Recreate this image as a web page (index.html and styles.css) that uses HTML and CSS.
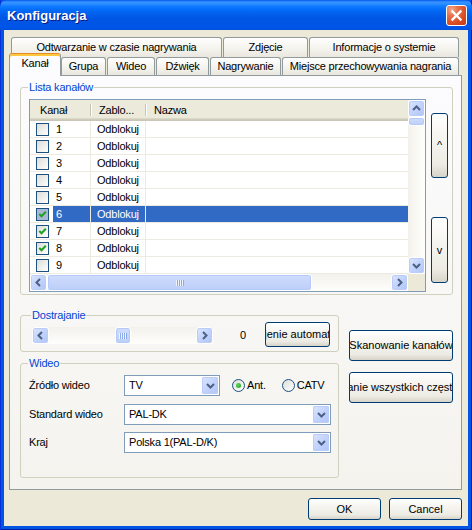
FILE: index.html
```html
<!DOCTYPE html>
<html lang="pl">
<head>
    <meta charset="UTF-8">
    <title>Konfiguracja</title>
    <link rel="stylesheet" href="styles.css">
</head>
<body>
    <div class="window">
        <div class="titlebar">
            <span class="title">Konfiguracja</span>
            <span class="close-btn">
                <svg width="19" height="19" viewBox="0 0 19 19"><path d="M5.5 5.5 L13.5 13.5 M13.5 5.5 L5.5 13.5" stroke="#fff" stroke-width="2.4" stroke-linecap="square"/></svg>
            </span>
        </div>

        <div class="client">
            <div class="tabs">
                <div class="tabrow back">
                    <div class="tab tab-odtw">Odtwarzanie w czasie nagrywania</div>
                    <div class="tab tab-zdj">Zdjęcie</div>
                    <div class="tab tab-info">Informacje o systemie</div>
                </div>
                <div class="tabrow front">
                    <div class="tab tab-kanal active">Kanał</div>
                    <div class="tab tab-grupa">Grupa</div>
                    <div class="tab tab-wideo">Wideo</div>
                    <div class="tab tab-dzwiek">Dźwięk</div>
                    <div class="tab tab-nagr">Nagrywanie</div>
                    <div class="tab tab-miejsce">Miejsce przechowywania nagrania</div>
                </div>
            </div>

            <div class="pane">
                <fieldset class="group channels">
                    <legend>Lista kanałów</legend>
                    <div class="channels-body">
                        <div class="listview">
                            <div class="lv-main">
                                <div class="lv-header">
                                    <div class="hcell c1 first">Kanał</div>
                                    <div class="hcell c2">Zablo...</div>
                                    <div class="hcell c3">Nazwa</div>
                                </div>
                                <div class="lv-row">
                                    <div class="cell c1"><span class="chk"></span><span class="num">1</span></div>
                                    <div class="cell c2">Odblokuj</div>
                                    <div class="cell c3"></div>
                                </div>
                                <div class="lv-row">
                                    <div class="cell c1"><span class="chk"></span><span class="num">2</span></div>
                                    <div class="cell c2">Odblokuj</div>
                                    <div class="cell c3"></div>
                                </div>
                                <div class="lv-row">
                                    <div class="cell c1"><span class="chk"></span><span class="num">3</span></div>
                                    <div class="cell c2">Odblokuj</div>
                                    <div class="cell c3"></div>
                                </div>
                                <div class="lv-row">
                                    <div class="cell c1"><span class="chk"></span><span class="num">4</span></div>
                                    <div class="cell c2">Odblokuj</div>
                                    <div class="cell c3"></div>
                                </div>
                                <div class="lv-row">
                                    <div class="cell c1"><span class="chk"></span><span class="num">5</span></div>
                                    <div class="cell c2">Odblokuj</div>
                                    <div class="cell c3"></div>
                                </div>
                                <div class="lv-row selected">
                                    <div class="cell c1"><span class="chk checked"><svg width="11" height="11" viewBox="0 0 11 11"><path d="M2.3 5 L4.5 7.3 L8.8 2.8" fill="none" stroke="#21A121" stroke-width="2"/></svg></span><span class="num">6</span></div>
                                    <div class="cell c2">Odblokuj</div>
                                    <div class="cell c3"></div>
                                </div>
                                <div class="lv-row">
                                    <div class="cell c1"><span class="chk checked"><svg width="11" height="11" viewBox="0 0 11 11"><path d="M2.3 5 L4.5 7.3 L8.8 2.8" fill="none" stroke="#21A121" stroke-width="2"/></svg></span><span class="num">7</span></div>
                                    <div class="cell c2">Odblokuj</div>
                                    <div class="cell c3"></div>
                                </div>
                                <div class="lv-row">
                                    <div class="cell c1"><span class="chk checked"><svg width="11" height="11" viewBox="0 0 11 11"><path d="M2.3 5 L4.5 7.3 L8.8 2.8" fill="none" stroke="#21A121" stroke-width="2"/></svg></span><span class="num">8</span></div>
                                    <div class="cell c2">Odblokuj</div>
                                    <div class="cell c3"></div>
                                </div>
                                <div class="lv-row">
                                    <div class="cell c1"><span class="chk"></span><span class="num">9</span></div>
                                    <div class="cell c2">Odblokuj</div>
                                    <div class="cell c3"></div>
                                </div>
                            </div>

                            <div class="vscroll">
                                <span class="sb-btn"><svg width="15" height="15" viewBox="0 0 15 15"><path d="M4 9 L7.5 5.5 L11 9" fill="none" stroke="#4D6185" stroke-width="2"/></svg></span>
                                <span class="sb-thumb v-thumb"></span>
                                <span class="sb-space"></span>
                                <span class="sb-btn"><svg width="15" height="15" viewBox="0 0 15 15"><path d="M4 6 L7.5 9.5 L11 6" fill="none" stroke="#4D6185" stroke-width="2"/></svg></span>
                            </div>

                            <div class="hscroll">
                                <span class="sb-btn"><svg width="15" height="15" viewBox="0 0 15 15"><path d="M9 4 L5.5 7.5 L9 11" fill="none" stroke="#4D6185" stroke-width="2"/></svg></span>
                                <span class="sb-thumb h-thumb"><span class="grip"></span></span>
                                <span class="sb-space"></span>
                                <span class="sb-btn"><svg width="15" height="15" viewBox="0 0 15 15"><path d="M6 4 L9.5 7.5 L6 11" fill="none" stroke="#4D6185" stroke-width="2"/></svg></span>
                            </div>
                            <div class="lv-corner"></div>
                        </div>

                        <div class="move-btns">
                            <button class="btn move-up">^</button>
                            <button class="btn move-down">v</button>
                        </div>
                    </div>
                </fieldset>

                <div class="lower">
                    <div class="left-col">
                        <fieldset class="group tune">
                            <legend>Dostrajanie</legend>
                            <div class="tune-row">
                                <div class="slider">
                                    <span class="sb-btn"><svg width="15" height="15" viewBox="0 0 15 15"><path d="M9 4 L5.5 7.5 L9 11" fill="none" stroke="#4D6185" stroke-width="2"/></svg></span>
                                    <span class="sb-space slider-left"></span>
                                    <span class="sb-thumb s-thumb"><span class="grip"></span></span>
                                    <span class="sb-space"></span>
                                    <span class="sb-btn"><svg width="15" height="15" viewBox="0 0 15 15"><path d="M6 4 L9.5 7.5 L6 11" fill="none" stroke="#4D6185" stroke-width="2"/></svg></span>
                                </div>
                                <span class="tune-value">0</span>
                                <button class="btn clip tune-btn"><span>Dostrojenie automatyczne</span></button>
                            </div>
                        </fieldset>

                        <fieldset class="group video">
                            <legend>Wideo</legend>
                            <div class="form-row">
                                <span class="form-label">Źródło wideo</span>
                                <div class="combo combo-short">
                                    <span class="combo-text">TV</span>
                                    <span class="combo-btn"><svg width="15" height="15" viewBox="0 0 15 15"><path d="M4 6 L7.5 9.5 L11 6" fill="none" stroke="#4D6185" stroke-width="2"/></svg></span>
                                </div>
                                <label class="radio radio-ant"><span class="radio-dot on"></span>Ant.</label>
                                <label class="radio radio-catv"><span class="radio-dot"></span>CATV</label>
                            </div>
                            <div class="form-row">
                                <span class="form-label">Standard wideo</span>
                                <div class="combo combo-long">
                                    <span class="combo-text">PAL-DK</span>
                                    <span class="combo-btn"><svg width="15" height="15" viewBox="0 0 15 15"><path d="M4 6 L7.5 9.5 L11 6" fill="none" stroke="#4D6185" stroke-width="2"/></svg></span>
                                </div>
                            </div>
                            <div class="form-row">
                                <span class="form-label">Kraj</span>
                                <div class="combo combo-long">
                                    <span class="combo-text">Polska 1(PAL-D/K)</span>
                                    <span class="combo-btn"><svg width="15" height="15" viewBox="0 0 15 15"><path d="M4 6 L7.5 9.5 L11 6" fill="none" stroke="#4D6185" stroke-width="2"/></svg></span>
                                </div>
                            </div>
                        </fieldset>
                    </div>

                    <div class="right-col">
                        <button class="btn clip scan-btn"><span>Skanowanie kanałów</span></button>
                        <button class="btn clip scan-btn"><span>Skanowanie wszystkich częstotliwości</span></button>
                    </div>
                </div>
            </div>

            <div class="footer">
                <button class="btn dlg-btn">OK</button>
                <button class="btn dlg-btn">Cancel</button>
            </div>
        </div>
    </div>
</body>
</html>
```

FILE: styles.css
```css
* {
    margin: 0;
    padding: 0;
    box-sizing: border-box;
}

body {
    width: 472px;
    height: 530px;
    overflow: hidden;
    font-family: "Liberation Sans", Arial, sans-serif;
    font-size: 11px;
    line-height: 13px;
    letter-spacing: -0.2px;
    color: #000;
    background: #fff;
}

/* window frame */
.window {
    width: 472px;
    height: 530px;
    display: flex;
    flex-direction: column;
    padding: 0 4px 4px;
    background: #0055E5;
    box-shadow: inset 1px 0 #0831D9, inset -1px 0 #001EA0, inset 0 -1px #001EA0;
}

.titlebar {
    height: 30px;
    margin: 0 -4px;
    padding: 0 5px 0 7px;
    display: flex;
    align-items: center;
    justify-content: space-between;
    border-radius: 7px 7px 0 0;
    background: linear-gradient(#0058EE 0px, #3A93FF 2px, #288EFF 4px, #127DFF 6px, #036FFC 9px, #0262EE 13px, #0057E5 18px, #0054E3 23px, #0055EB 27px, #0050D8 30px);
}

.title {
    color: #fff;
    font-weight: bold;
    font-size: 13px;
    letter-spacing: 0;
    text-shadow: 1px 1px #0A1883;
}

.close-btn {
    width: 21px;
    height: 21px;
    display: flex;
    align-items: center;
    justify-content: center;
    border: 1px solid #fff;
    border-radius: 3px;
    background: radial-gradient(circle at 25% 20%, #F4A98C 0, #E5714B 30%, #D8481D 70%, #C33A16 100%);
}

.client {
    flex: 1;
    display: flex;
    flex-direction: column;
    padding: 7px 6px 0 5px;
    background: #ECE9D8;
}

/* tabs */
.tabs {
    display: flex;
    flex-direction: column;
    padding-left: 2px;
}

.tabrow {
    display: flex;
    gap: 1px;
}

.tabrow.back {
    height: 20px;
}

.tabrow.front {
    height: 18px;
}

.tab {
    display: flex;
    align-items: center;
    justify-content: center;
    white-space: nowrap;
    border: 1px solid #919B9C;
    border-bottom: none;
    border-radius: 3px 3px 0 0;
    background: linear-gradient(#FFFFFF, #F3F2EC 60%, #E9E7DE);
}

.tab.active {
    position: relative;
    z-index: 1;
    height: 23px;
    margin: -4px -1px -1px -2px;
    padding-bottom: 3px;
    border-top: 1px solid #E68B2C;
    background: #FCFCFE;
    box-shadow: inset 0 2px #FFC73C;
}

.tab-odtw { width: 211px; }
.tab-zdj { width: 85px; }
.tab-info { width: 150px; }
.tab-kanal { width: 52px; }
.tab-grupa { width: 45px; }
.tab-wideo { width: 48px; }
.tab-dzwiek { width: 53px; }
.tab-nagr { width: 71px; }
.tab-miejsce { width: 177px; }

.pane {
    height: 415px;
    padding: 5px 8px 0 10px;
    border: 1px solid #919B9C;
    background: linear-gradient(#FCFCFE, #F4F3EE);
}

/* group boxes */
.group {
    border: 1px solid #D0D0BF;
    border-radius: 3px;
}

.group legend {
    margin-left: -1px;
    padding: 0 1px;
    color: #0046D5;
    line-height: 13px;
}

.channels {
    height: 214px;
    padding: 5px 4px 2px 8px;
}

.channels-body {
    display: flex;
    gap: 5px;
}

/* channel list */
.listview {
    width: 397px;
    height: 193px;
    display: grid;
    grid-template-columns: 378px 17px;
    grid-template-rows: 174px 17px;
    border: 1px solid #7F9DB9;
    background: #fff;
}

.lv-main {
    overflow: hidden;
}

.lv-header {
    height: 21px;
    display: flex;
    background: linear-gradient(#EBEADB 0, #EBEADB 18px, #E2DECD 18px, #D6D2C2 19px, #CBC7B8 20px);
}

.hcell {
    position: relative;
    padding: 4px 0 0 8px;
    white-space: nowrap;
}

.hcell.first {
    padding-left: 10px;
}

.hcell.c1::after,
.hcell.c2::after {
    content: "";
    position: absolute;
    right: 0;
    top: 4px;
    width: 1px;
    height: 12px;
    background: #C7C5B2;
    box-shadow: 1px 0 #fff;
}

.c1 { width: 61px; }
.c2 { width: 55px; }
.c3 { flex: 1; }

.lv-row {
    height: 17px;
    display: flex;
    border-bottom: 1px solid #EDEBE0;
}

.cell {
    display: flex;
    align-items: center;
    white-space: nowrap;
}

.cell.c1,
.cell.c2 {
    border-right: 1px solid #EDEBE0;
}

.cell.c1 {
    padding-left: 6px;
}

.cell.c2 {
    padding-left: 6px;
}

.num {
    flex: 1;
    align-self: stretch;
    display: flex;
    align-items: center;
    margin-left: 4px;
    padding-left: 3px;
}

.lv-row.selected .num,
.lv-row.selected .cell.c2,
.lv-row.selected .cell.c3 {
    background: #316AC5;
    color: #fff;
}

.chk {
    width: 13px;
    height: 13px;
    display: flex;
    align-items: center;
    justify-content: center;
    border: 1px solid #1C5180;
    background: linear-gradient(135deg, #DCDCD7, #FFFFFF);
}

.lv-row.selected .chk {
    background: #A9B8D4;
}

/* scroll bars */
.vscroll {
    grid-row: 1;
    grid-column: 2;
    display: flex;
    flex-direction: column;
    background: linear-gradient(to right, #F3F1EC, #FEFEFB);
}

.hscroll {
    grid-row: 2;
    grid-column: 1;
    display: flex;
    background: linear-gradient(#F3F1EC, #FEFEFB);
}

.lv-corner {
    background: #ECE9D8;
}

.sb-btn {
    width: 17px;
    height: 17px;
    flex: none;
    display: flex;
    align-items: center;
    justify-content: center;
    border: 1px solid #fff;
    border-radius: 3px;
    background: linear-gradient(135deg, #DCE6FE, #C2D3FC 50%, #B0C5F6);
    box-shadow: inset 0 0 0 1px #BACCF7;
}

.sb-thumb {
    flex: none;
    display: flex;
    align-items: center;
    justify-content: center;
    border: 1px solid #fff;
    border-radius: 3px;
    background: linear-gradient(#CFDCFC, #BCCEF9);
    box-shadow: inset 0 0 0 1px #B5CAF8;
}

.sb-space {
    flex: 1;
}

.v-thumb {
    height: 9px;
}

.h-thumb {
    width: 265px;
}

.grip {
    width: 8px;
    height: 6px;
    background: repeating-linear-gradient(to right, #EEF4FE 0 1px, #8CA9E8 1px 2px);
}

/* push buttons */
.btn {
    display: flex;
    align-items: center;
    justify-content: center;
    font: inherit;
    color: #000;
    white-space: nowrap;
    overflow: hidden;
    border: 1px solid #003C74;
    border-radius: 3px;
    background: linear-gradient(#FFFFFF, #F5F4EF 40%, #ECEBE4 80%, #D8D3C7);
}

.move-btns {
    display: flex;
    flex-direction: column;
    padding-top: 14px;
}

.move-btns .btn {
    width: 17px;
}

.move-up {
    height: 65px;
}

.move-down {
    height: 66px;
    margin-top: 39px;
}

/* lower part */
.lower {
    display: flex;
    gap: 10px;
    margin-top: 14px;
}

.left-col {
    width: 319px;
    display: flex;
    flex-direction: column;
    gap: 5px;
}

.tune {
    height: 43px;
    padding: 0 8px 0 11px;
}

.tune-row {
    display: flex;
    align-items: flex-start;
    height: 25px;
}

.slider {
    width: 181px;
    height: 17px;
    margin-top: 5px;
    display: flex;
    background: linear-gradient(#F3F1EC, #FEFEFB);
}

.slider-left {
    flex: none;
    width: 66px;
}

.s-thumb {
    width: 16px;
}

.tune-value {
    margin: 7px 0 0 27px;
}

.tune-btn {
    width: 65px;
    height: 25px;
    margin-left: auto;
    padding-right: 4px;
}

.video {
    height: 121px;
    padding: 5px 7px 0 8px;
    display: flex;
    flex-direction: column;
    gap: 8px;
}

.form-row {
    display: flex;
    align-items: center;
    height: 21px;
}

.form-row + .form-row + .form-row {
    margin-top: -1px;
}

.form-label {
    width: 95px;
}

.combo {
    height: 21px;
    display: flex;
    align-items: center;
    padding: 1px;
    border: 1px solid #7F9DB9;
    background: #fff;
}

.combo-short {
    width: 96px;
}

.combo-long {
    width: 207px;
}

.combo-text {
    flex: 1;
    padding-left: 3px;
}

.combo-btn {
    width: 16px;
    height: 17px;
    display: flex;
    align-items: center;
    justify-content: center;
    border-radius: 2px;
    background: linear-gradient(135deg, #DCE6FE, #C2D3FC 50%, #B0C5F6);
    box-shadow: inset 0 0 0 1px #BACCF7;
}

.radio {
    display: flex;
    align-items: center;
    gap: 2px;
}

.radio-ant {
    margin-left: 12px;
}

.radio-catv {
    margin-left: 16px;
}

.radio-dot {
    width: 13px;
    height: 13px;
    display: flex;
    align-items: center;
    justify-content: center;
    border: 1px solid #1C5180;
    border-radius: 50%;
    background: linear-gradient(135deg, #DCDCD7, #FFFFFF);
}

.radio-dot.on::after {
    content: "";
    width: 5px;
    height: 5px;
    border-radius: 50%;
    background: radial-gradient(circle at 35% 35%, #5CD45C, #21A121);
}

.right-col {
    display: flex;
    flex-direction: column;
    gap: 11px;
    padding-top: 21px;
}

.scan-btn {
    width: 104px;
    height: 31px;
}

/* dialog buttons */
.footer {
    display: flex;
    justify-content: flex-end;
    gap: 8px;
    margin-top: 8px;
}

.dlg-btn {
    width: 73px;
    height: 22px;
}
```
